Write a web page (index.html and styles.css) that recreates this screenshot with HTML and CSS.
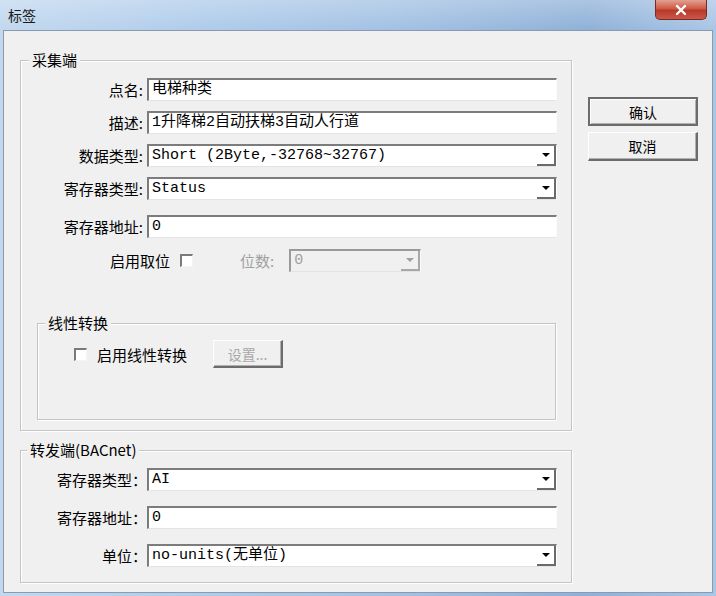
FILE: index.html
```html
<html>
    <head>
        <meta charset="utf-8">
        <link rel="stylesheet" href="styles.css">
    </head>
    <body>
        <div class="window">
            <div class="titlebar">
                <span class="title">标签</span>
                <span class="close">
                    <svg width="14" height="12" viewBox="0 0 14 12"><path d="M3 2 L11 10 M11 2 L3 10" stroke="#fff" stroke-width="2.4" stroke-linecap="round"/></svg>
                </span>
            </div>
            <div class="client">
                <div class="main">
                    <div class="group collect">
                        <span class="group-title">采集端</span>
                        <div class="form">
                            <label>点名:</label><div class="field">电梯种类</div>
                            <label>描述:</label><div class="field">1升降梯2自动扶梯3自动人行道</div>
                            <label>数据类型:</label><div class="field select"><span>Short (2Byte,-32768~32767)</span><span class="arrow"></span></div>
                            <label>寄存器类型:</label><div class="field select"><span>Status</span><span class="arrow"></span></div>
                            <label class="push">寄存器地址:</label><div class="field push">0</div>
                        </div>
                        <div class="bit-row">
                            <span>启用取位</span>
                            <span class="check"></span>
                            <span class="muted">位数:</span>
                            <div class="field select off"><span>0</span><span class="arrow"></span></div>
                        </div>
                        <div class="group linear">
                            <span class="group-title">线性转换</span>
                            <div class="check-row">
                                <span class="check"></span>
                                <span class="check-label">启用线性转换</span>
                                <button class="btn small" disabled>设置...</button>
                            </div>
                        </div>
                    </div>
                    <div class="group forward">
                        <span class="group-title">转发端(BACnet)</span>
                        <div class="form tight">
                            <label>寄存器类型：</label><div class="field select"><span>AI</span><span class="arrow"></span></div>
                            <label>寄存器地址：</label><div class="field">0</div>
                            <label>单位：</label><div class="field select"><span>no-units(无单位)</span><span class="arrow"></span></div>
                        </div>
                    </div>
                </div>
                <div class="side">
                    <button class="btn default">确认</button>
                    <button class="btn">取消</button>
                </div>
            </div>
        </div>
    </body>
</html>
```
FILE: styles.css
```css
body {
    margin: 0;
    width: 716px;
    height: 596px;
    overflow: hidden;
    font-family: "Noto Sans CJK SC", sans-serif;
    color: #000;
}

.window {
    width: 716px;
    height: 596px;
    box-sizing: border-box;
    display: flex;
    flex-direction: column;
    padding: 0 3px 3px 3px;
    background:
        linear-gradient(to bottom, rgba(255,255,255,0.25), rgba(255,255,255,0) 30px),
        linear-gradient(to right, #c2d8ef, #aecbea 30%, #a3c1e3 55%, #8fb1d8 82%, #aac6e6);
}

.titlebar {
    height: 30px;
    display: flex;
    justify-content: space-between;
    align-items: flex-start;
    flex-shrink: 0;
}
.title {
    font-size: 14px;
    line-height: 16px;
    margin: 7px 0 0 5px;
    color: #1a1a1a;
}
.close {
    width: 52px;
    height: 20px;
    margin-right: 6px;
    display: flex;
    align-items: center;
    justify-content: center;
    background: linear-gradient(to bottom, #e3a192, #cf5a44 45%, #b8392a 55%, #c8594a);
    border: 1px solid #7a2a20;
    border-top: none;
    border-radius: 0 0 5px 5px;
    box-sizing: border-box;
}

.client {
    flex: 1;
    display: flex;
    background: #f0f0f0;
    border: 1px solid #8a9bb0;
    padding: 29px 0 0 16px;
}

.main {
    width: 552px;
}

.side {
    margin-left: 16px;
    padding-top: 37px;
    display: flex;
    flex-direction: column;
    gap: 6px;
}

/* group boxes */
.group {
    position: relative;
    box-sizing: border-box;
    border: 1px solid #c4c4c4;
    box-shadow: inset 1px 1px 0 #fff, 1px 1px 0 #fff;
}
.group-title {
    position: absolute;
    top: -11px;
    left: 8px;
    padding: 0 3px;
    background: #f0f0f0;
    font-size: 15px;
    line-height: 20px;
}

.collect {
    height: 371px;
    padding-top: 17px;
}
.forward {
    margin-top: 19px;
    height: 133px;
    padding-top: 17px;
}
.forward .group-title {
    left: 6px;
}

.form {
    display: grid;
    grid-template-columns: 126px 410px;
    row-gap: 10px;
    align-items: center;
}
.form label {
    text-align: right;
    padding-right: 4px;
    font-size: 15px;
    line-height: 20px;
}
.form .push {
    margin-top: 5px;
}
.form.tight {
    row-gap: 15px;
}
.form.tight label {
    padding-right: 0;
}

/* text boxes and combos */
.field {
    height: 23px;
    box-sizing: border-box;
    background: #fff;
    border-top: 2px solid #7c7c7c;
    border-left: 2px solid #7c7c7c;
    border-right: 1px solid #fbfbfb;
    border-bottom: 1px solid #e4e4e4;
    padding-left: 3px;
    font-family: "Liberation Mono", "Noto Sans CJK SC", monospace;
    font-size: 15px;
    line-height: 20px;
    display: flex;
    align-items: center;
    white-space: nowrap;
}
.field.select {
    justify-content: space-between;
}
.arrow {
    width: 19px;
    height: 20px;
    box-sizing: border-box;
    border-right: 2px solid #6a6a6a;
    border-bottom: 2px solid #6a6a6a;
    display: flex;
    align-items: center;
    justify-content: center;
}
.arrow::after {
    content: "";
    border-left: 4px solid transparent;
    border-right: 4px solid transparent;
    border-top: 4px solid #000;
}
.field.off {
    width: 132px;
    margin-left: 15px;
    background: #f0f0f0;
    color: #a0a0a0;
    border-top-color: #9a9a9a;
    border-left-color: #9a9a9a;
}
.field.off .arrow {
    border-color: #a8a8a8;
}
.field.off .arrow::after {
    border-top-color: #a0a0a0;
}

.bit-row {
    display: flex;
    align-items: center;
    height: 23px;
    margin-top: 11px;
    padding-left: 89px;
    font-size: 15px;
}
.muted {
    color: #a0a0a0;
    margin-left: 47px;
}

.check {
    width: 13px;
    height: 13px;
    box-sizing: border-box;
    background: #fff;
    border-top: 2px solid #7a7a7a;
    border-left: 2px solid #7a7a7a;
    border-right: 1px solid #f4f4f4;
    border-bottom: 1px solid #f4f4f4;
    margin-left: 10px;
}

.linear {
    margin: 51px 0 0 16px;
    width: 519px;
    height: 97px;
    padding: 16px 0 0 36px;
}
.linear .group-title {
    left: 7px;
}
.check-row {
    display: flex;
    align-items: center;
    font-size: 15px;
}
.check-row .check {
    margin-left: 0;
}
.check-label {
    margin-left: 10px;
}

/* push buttons */
.btn {
    width: 110px;
    height: 29px;
    box-sizing: border-box;
    background: #f0f0f0;
    font-family: "Noto Sans CJK SC", sans-serif;
    font-size: 14px;
    color: #000;
    padding: 0;
    border-top: 1px solid #fff;
    border-left: 1px solid #fff;
    border-right: 2px solid #6c6c6c;
    border-bottom: 2px solid #6c6c6c;
    box-shadow: inset -1px -1px 0 #b0b0b0;
}
.btn.default {
    border: 2px solid #6c6c6c;
    box-shadow: inset 1px 1px 0 #fff, inset -1px -1px 0 #b0b0b0;
}
.btn.small {
    width: 70px;
    height: 28px;
    margin-left: 26px;
    color: #a8a8a8;
}
```
